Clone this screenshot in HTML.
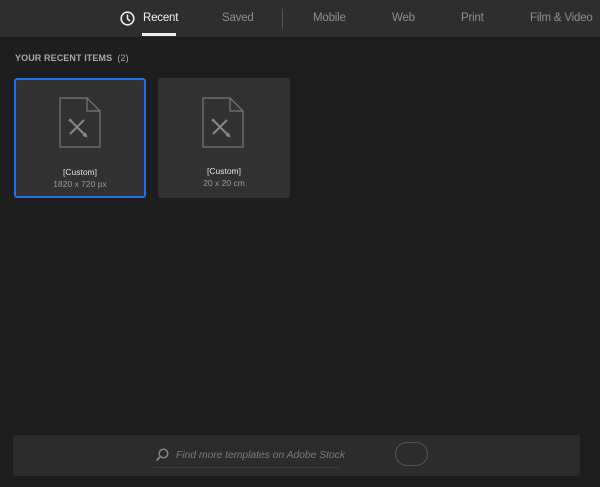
<!DOCTYPE html>
<html><head><meta charset="utf-8"><style>
*{margin:0;padding:0;box-sizing:border-box}
body{width:600px;height:487px;background:#1e1e1e;font-family:"Liberation Sans",sans-serif;position:relative;overflow:hidden}
.top{position:absolute;left:0;top:0;width:600px;height:37px;background:#2e2e2e}
.tab{position:absolute;top:12px;font-size:11.5px;color:#8e8e8e;letter-spacing:-0.2px}
.act{color:#f0f0f0}
.ul{position:absolute;left:142px;top:33px;width:34px;height:3px;background:#f0f0f0}
.sep{position:absolute;left:282px;top:9px;width:1px;height:20px;background:#555}
.hdr{position:absolute;left:15px;top:53px;font-size:9px;color:#a8a8a8;font-weight:bold;letter-spacing:0.1px}
.card{position:absolute;top:78px;width:132px;height:120px;background:#323232;border-radius:3px}
.sel{border:2px solid #1b73e8}
.t1{position:absolute;left:0;width:100%;top:88px;text-align:center;font-size:8.5px;color:#e0e0e0}
.t2{position:absolute;left:0;width:100%;top:100px;text-align:center;font-size:8.5px;color:#9a9a9a}
.ic{position:absolute;left:44px;top:19px}
.bot{position:absolute;left:13px;top:435px;width:567px;height:41px;background:#2c2c2c;border-radius:3px}
.ph{position:absolute;left:176px;top:449px;font-size:10.5px;font-style:italic;color:#7a7a7a;letter-spacing:-0.1px}
.line{position:absolute;left:153px;top:467px;width:186px;height:1px;background:#3d3d3d}
.go{position:absolute;left:395px;top:442px;width:33px;height:24px;border:1px solid #555;border-radius:12px}
</style></head><body>
<div class="top"></div>
<svg style="position:absolute;left:120px;top:11px" width="15" height="15" viewBox="0 0 15 15"><circle cx="7.5" cy="7.5" r="6.3" fill="none" stroke="#eee" stroke-width="1.6"/><path d="M7.5 3.5V7.8L10 10" fill="none" stroke="#eee" stroke-width="1.5"/></svg>
<div class="tab act" style="left:143px">Recent</div>
<div class="ul"></div>
<div class="tab" style="left:222px">Saved</div>
<div class="sep"></div>
<div class="tab" style="left:313px">Mobile</div>
<div class="tab" style="left:392px">Web</div>
<div class="tab" style="left:461px">Print</div>
<div class="tab" style="left:530px">Film &amp; Video</div>
<div class="hdr">YOUR RECENT ITEMS &nbsp;<span style="font-weight:normal">(2)</span></div>
<div class="card sel" style="left:14px"><svg class="ic" width="44" height="52" viewBox="0 0 44 52" style="left:43px;top:17px"><path d="M1 1H28L41 14V50H1Z M28 1V14H41" fill="none" stroke="#777" stroke-width="1.2"/><path d="M11 23L25 37M25 23L11 37M12 22L10 24M24 38L27 39L26 36" fill="none" stroke="#888" stroke-width="2"/></svg><div class="t1" style="top:87px">[Custom]</div><div class="t2" style="top:99px">1820 x 720 px</div></div>
<div class="card" style="left:158px"><svg class="ic" width="44" height="52" viewBox="0 0 44 52"><path d="M1 1H28L41 14V50H1Z M28 1V14H41" fill="none" stroke="#777" stroke-width="1.2"/><path d="M11 23L25 37M25 23L11 37M12 22L10 24M24 38L27 39L26 36" fill="none" stroke="#888" stroke-width="2"/></svg><div class="t1">[Custom]</div><div class="t2">20 x 20 cm</div></div>
<div class="bot"></div>
<svg style="position:absolute;left:155px;top:448px" width="14" height="14" viewBox="0 0 14 14"><circle cx="8.5" cy="5.5" r="4.3" fill="none" stroke="#888" stroke-width="1.4"/><path d="M5.5 8.5L1.5 12.5" stroke="#888" stroke-width="1.6"/></svg>
<div class="ph">Find more templates on Adobe Stock</div>
<div class="line"></div>
<div class="go"></div>
</body></html>
